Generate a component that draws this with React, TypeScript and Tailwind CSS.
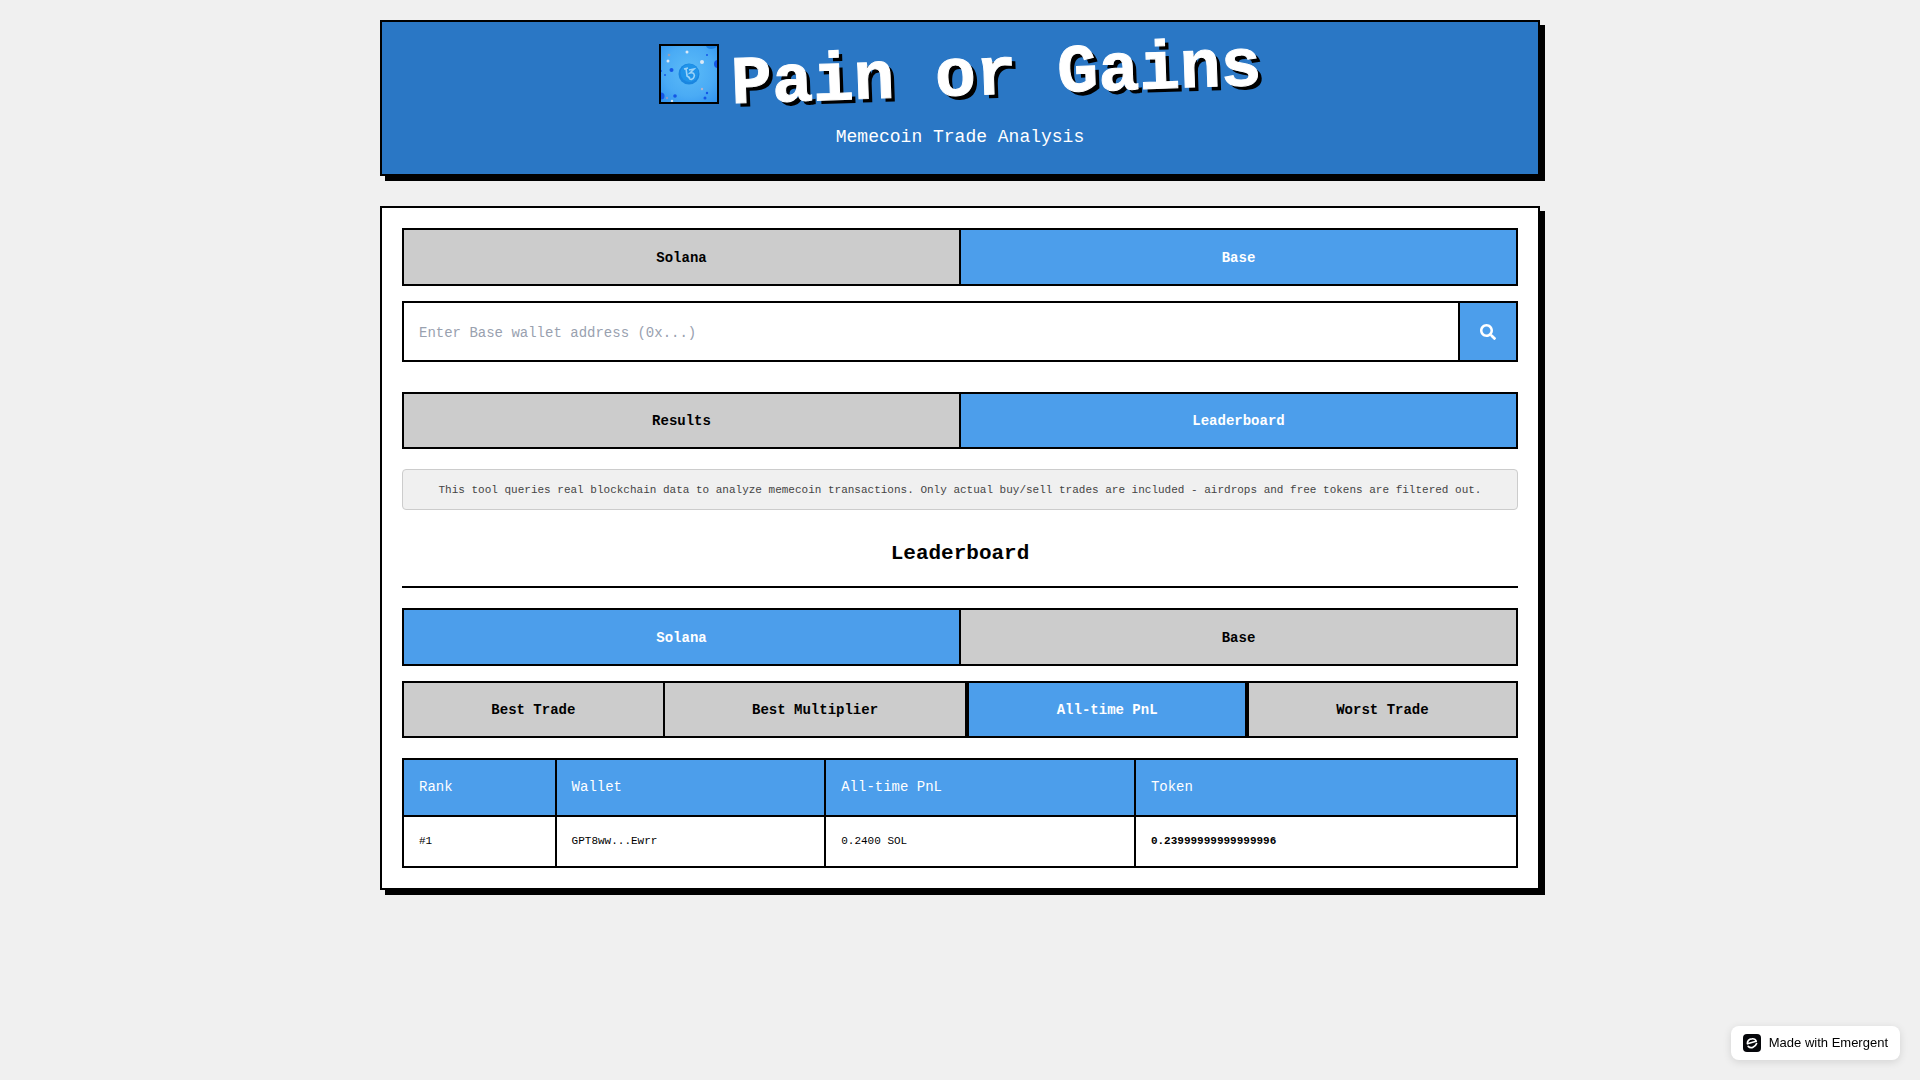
import { FaSearch } from "react-icons/fa";

type TabProps = { label: string; active?: boolean; className?: string };

function Tab({ label, active = false, className = "" }: TabProps) {
  return (
    <button
      type="button"
      aria-pressed={active}
      className={`border-black px-4 pt-[2px] text-[14px] font-bold ${active ? "bg-[#4c9eeb] text-white" : "bg-[#cccccc] text-black"} ${className}`}
    >
      {label}
    </button>
  );
}

function Logo() {
  return (
    <svg viewBox="0 0 56 56" className="size-full" role="img" aria-label="Pain or Gains logo">
      <defs>
        <radialGradient id="sky" cx="50%" cy="45%" r="75%">
          <stop offset="0" stopColor="#5cbcf8" />
          <stop offset="0.6" stopColor="#4aabf5" />
          <stop offset="1" stopColor="#2f92f0" />
        </radialGradient>
      </defs>
      <rect width="56" height="56" fill="url(#sky)" />
      <circle cx="28" cy="28" r="10.5" fill="#1a86e0" />
      <circle cx="28.5" cy="27" r="9" fill="#2094ea" />
      <path d="M23 23l4-1M25 22l1 8 3 2M28 24l5-1-4 4c4-1 5 2 4 4-1 3-4 3-5 1" fill="none" stroke="#9cd3f8" strokeWidth="1.6" />
      <g fill="#1457e6">
        <circle cx="10.5" cy="24" r="2" />
        <circle cx="0" cy="50" r="3.5" />
        <circle cx="57" cy="18" r="4" />
        <circle cx="14" cy="50" r="1.8" />
        <circle cx="44" cy="52" r="1.5" />
        <circle cx="46" cy="47" r="1.2" />
        <circle cx="4" cy="29" r="1" />
        <circle cx="46" cy="9" r="1" />
        <circle cx="0" cy="25" r="1" />
      </g>
      <path d="M45 0c1 4 9 4 11 0z" fill="#1b7fe0" />
      <g fill="#dbe9f7">
        <circle cx="7" cy="15" r="1.5" />
        <circle cx="26" cy="6" r="1.5" />
        <circle cx="41" cy="16" r="2" />
        <circle cx="8" cy="9" r="1.3" fill="#9a9fb5" />
        <circle cx="41" cy="43" r="1.2" fill="#b7b5cc" />
        <circle cx="6" cy="52" r="1.2" fill="#8d9cc8" />
        <circle cx="11" cy="55" r="1.2" />
      </g>
    </svg>
  );
}

export default function App() {
  return (
    <div className="min-h-screen bg-[#f0f0f0] p-5 font-['Liberation_Mono',monospace] text-black">
      <div className="mx-auto flex max-w-[1160px] flex-col gap-[30px]">
        <header className="flex flex-col items-center border-2 border-black bg-[#2a77c5] px-5 pt-5 pb-6 shadow-[5px_5px_0_#000]">
          <div className="flex h-16 items-center gap-3">
            <div className="size-[60px] shrink-0 border-2 border-black">
              <Logo />
            </div>
            <h1 className="-rotate-2 pt-1 text-[68px] leading-[64px] font-bold whitespace-nowrap text-white [-webkit-text-stroke:1px_white] [text-shadow:4px_4px_0_#000]">
              Pain or Gains
            </h1>
          </div>
          <p className="mt-[18px] text-[18px] leading-[26px] text-white">Memecoin Trade Analysis</p>
        </header>

        <main className="border-2 border-black bg-white p-5 shadow-[5px_5px_0_#000]">
          <div className="flex h-[58px] border-2 border-black">
            <Tab label="Solana" className="flex-1 border-r-2" />
            <Tab label="Base" active className="flex-1" />
          </div>

          <form className="mt-[15px] flex h-[61px] border-2 border-black" onSubmit={(e) => e.preventDefault()}>
            <input
              type="text"
              aria-label="Wallet address"
              placeholder="Enter Base wallet address (0x...)"
              className="min-w-0 flex-1 bg-white px-[15px] pt-[3px] text-[14px] outline-none placeholder:text-gray-400"
            />
            <button
              type="submit"
              aria-label="Search"
              className="flex w-[58px] items-center justify-center border-l-2 border-black bg-[#4c9eeb] text-white"
            >
              <FaSearch size={16} />
            </button>
          </form>

          <div className="mt-[30px] flex h-[57px] border-2 border-black">
            <Tab label="Results" className="flex-1 border-r-2" />
            <Tab label="Leaderboard" active className="flex-1" />
          </div>

          <p className="mt-5 rounded-[4px] border border-[#cccccc] bg-[#f0f0f0] px-2 pt-[11px] pb-[9px] text-center text-[11px] leading-[19px] text-[#444444]">
            This tool queries real blockchain data to analyze memecoin transactions. Only actual buy/sell trades are
            included - airdrops and free tokens are filtered out.
          </p>

          <h2 className="mt-5 border-b-2 border-black pt-2 pb-4 text-center text-[21px] leading-8 font-bold">
            Leaderboard
          </h2>

          <div className="mt-5 flex h-[58px] border-2 border-black">
            <Tab label="Solana" active className="flex-1 border-r-2" />
            <Tab label="Base" className="flex-1" />
          </div>

          <div className="mt-[15px] flex h-[57px] border-2 border-black">
            <Tab label="Best Trade" className="flex-auto border-r-2" />
            <Tab label="Best Multiplier" className="flex-auto border-r-2" />
            <Tab label="All-time PnL" active className="flex-auto border-x-2" />
            <Tab label="Worst Trade" className="flex-auto border-l-2" />
          </div>

          <table className="mt-5 w-full table-fixed border-collapse text-left">
            <thead>
              <tr className="h-[57px] bg-[#4c9eeb] text-[14px] text-white">
                <th scope="col" className="w-[13.7%] border-2 border-black px-[15px] font-normal">Rank</th>
                <th scope="col" className="w-[24.2%] border-2 border-black px-[15px] font-normal">Wallet</th>
                <th scope="col" className="w-[27.8%] border-2 border-black px-[15px] font-normal">All-time PnL</th>
                <th scope="col" className="border-2 border-black px-[15px] font-normal">Token</th>
              </tr>
            </thead>
            <tbody>
              <tr className="h-[51px] text-[11px]">
                <td className="border-2 border-black px-[15px]">#1</td>
                <td className="border-2 border-black px-[15px]">GPT8ww...Ewrr</td>
                <td className="border-2 border-black px-[15px]">0.2400 SOL</td>
                <td className="border-2 border-black px-[15px] font-bold">0.23999999999999996</td>
              </tr>
            </tbody>
          </table>
        </main>
      </div>

      <a
        href="#emergent"
        className="fixed right-5 bottom-5 flex h-[34px] items-center gap-2 rounded-lg bg-white px-3 font-['Liberation_Sans',sans-serif] text-[13px] leading-4 text-black shadow-[0_2px_8px_rgba(0,0,0,0.12)]"
      >
        <svg viewBox="0 0 18 18" className="size-[18px]" aria-hidden="true">
          <rect width="18" height="18" rx="4" fill="#05060a" />
          <path
            d="M13.2 7.2C12.6 5.4 11 4.6 9 4.8 6.200 5 4.300 7 4.400 9.800L13.200 7.200M5.200 12.300C7.500 14.600 12.300 13.600 13.600 9.600"
            fill="none"
            stroke="#fff"
            strokeWidth="1.7"
            strokeLinecap="round"
            strokeLinejoin="round"
          />
        </svg>
        Made with Emergent
      </a>
    </div>
  );
}
